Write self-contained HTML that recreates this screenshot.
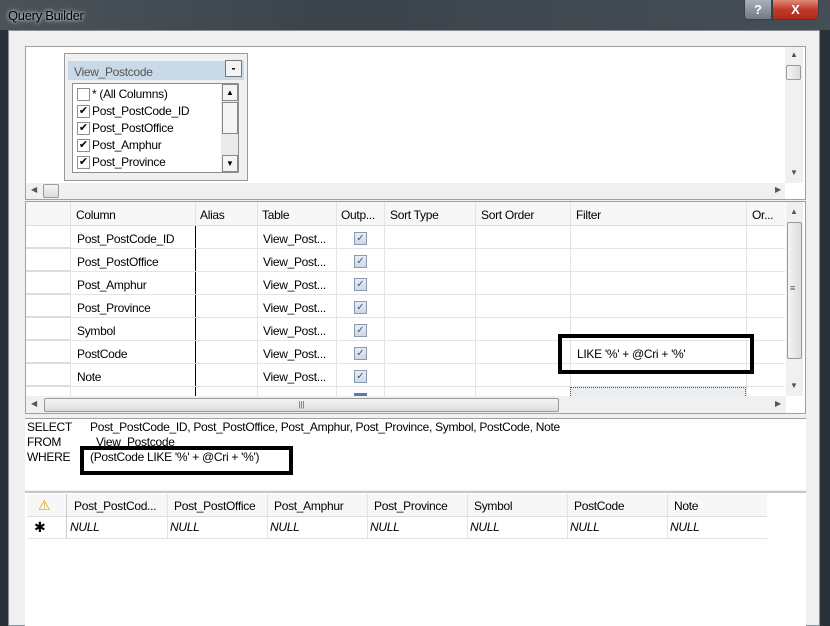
<!DOCTYPE html>
<html><head><style>
*{margin:0;padding:0;box-sizing:border-box}
body{width:830px;height:626px;overflow:hidden;background:#2b3138;font-family:"Liberation Sans",sans-serif;font-size:12px;color:#000;position:relative}
.a{position:absolute}
.t{position:absolute;white-space:nowrap;font-size:12px;letter-spacing:-0.3px}
.vl{position:absolute;width:1px;background:#e4e4e4}
.hl{position:absolute;height:1px;background:#e4e4e4}
.cb{position:absolute;width:13px;height:13px;border:1px solid #8e8f8f;background:#fff;font-size:11px;line-height:11px;text-align:center}
.gc{position:absolute;width:13px;height:13px;border:1px solid #8a98b0;background:linear-gradient(#e8ecf2,#cfd8e6);color:#3a5a8a;font-size:10px;line-height:11px;text-align:center}
</style></head><body>
<div class="a" style="left:0;top:0;width:830px;height:30px;background:linear-gradient(90deg,#4a525a,#3b434b 40%,#454d56)"></div>
<div class="t" style="left:8px;top:8px;color:#000;font-size:13px;text-shadow:0 0 6px #c8ccd0,0 0 3px #e0e4e8">Query Builder</div>
<div class="a" style="left:744px;top:0;width:28px;height:20px;background:linear-gradient(#a9b0b8,#707a84);border:1px solid #3a3f45;border-top:none;border-radius:0 0 0 4px;color:#fff;font-weight:bold;text-align:center;font-size:13px;line-height:19px">?</div>
<div class="a" style="left:772px;top:0;width:47px;height:20px;background:linear-gradient(#e08a78,#c0392b 50%,#b02a1a);border:1px solid #3a3f45;border-top:none;border-radius:0 0 4px 0;color:#fff;font-weight:bold;text-align:center;font-size:13px;line-height:19px">X</div>
<div class="a" style="left:8px;top:30px;width:812px;height:596px;background:#f0f0f0;border:1px solid #8a8f95"></div>
<!-- diagram pane -->
<div class="a" style="left:25px;top:46px;width:781px;height:154px;background:#fff;border:1px solid #a0a0a0"></div>
<div class="a" style="left:785px;top:47px;width:18px;height:136px;background:#f0f0f0"></div>
<div class="a" style="left:786px;top:65px;width:15px;height:15px;background:linear-gradient(90deg,#f4f4f4,#dcdcdc);border:1px solid #9a9a9a;border-radius:2px"></div>
<div class="t" style="left:790px;top:50px;font-size:8px;color:#555">▲</div>
<div class="t" style="left:790px;top:168px;font-size:8px;color:#555">▼</div>
<div class="a" style="left:26px;top:183px;width:759px;height:16px;background:#f0f0f0"></div>
<div class="a" style="left:43px;top:184px;width:16px;height:14px;background:linear-gradient(#f4f4f4,#dcdcdc);border:1px solid #9a9a9a;border-radius:2px"></div>
<div class="t" style="left:31px;top:185px;font-size:8px;color:#555">◀</div>
<div class="t" style="left:775px;top:185px;font-size:8px;color:#555">▶</div>
<div class="a" style="left:64px;top:53px;width:184px;height:128px;background:#f0f0f0;border:1px solid #9a9a9a"></div>
<div class="a" style="left:68px;top:61px;width:176px;height:19px;background:#cad9e8"></div>
<div class="t" style="left:74px;top:65px;color:#555">View_Postcode</div>
<div class="a" style="left:225px;top:60px;width:17px;height:17px;background:#f4f4f4;border:1px solid #777;font-weight:bold;text-align:center;line-height:14px">-</div>
<div class="a" style="left:72px;top:83px;width:167px;height:90px;background:#fff;border:1px solid #8e8f8f"></div>
<div class="a" style="left:221px;top:84px;width:17px;height:88px;background:#eaeaea"></div>
<div class="a" style="left:222px;top:84px;width:16px;height:17px;background:#f4f4f4;border:1px solid #888;font-size:8px;text-align:center;line-height:15px">▲</div>
<div class="a" style="left:222px;top:102px;width:16px;height:32px;background:#f4f4f4;border:1px solid #888"></div>
<div class="a" style="left:222px;top:155px;width:16px;height:17px;background:#f4f4f4;border:1px solid #888;font-size:8px;text-align:center;line-height:15px">▼</div>
<div class="cb" style="left:77px;top:88px"></div><div class="t" style="left:92px;top:87px">* (All Columns)</div>
<div class="cb" style="left:77px;top:105px">✔</div><div class="t" style="left:92px;top:104px">Post_PostCode_ID</div>
<div class="cb" style="left:77px;top:122px">✔</div><div class="t" style="left:92px;top:121px">Post_PostOffice</div>
<div class="cb" style="left:77px;top:139px">✔</div><div class="t" style="left:92px;top:138px">Post_Amphur</div>
<div class="cb" style="left:77px;top:156px">✔</div><div class="t" style="left:92px;top:155px">Post_Province</div>
<!-- grid pane -->
<div class="a" style="left:25px;top:201px;width:781px;height:213px;background:#fff;border:1px solid #a0a0a0"></div>
<div class="a" style="left:26px;top:202px;width:759px;height:24px;background:#f7f7f7;border-bottom:1px solid #ddd"></div>
<div class="t" style="left:76px;top:208px">Column</div>
<div class="t" style="left:200px;top:208px">Alias</div>
<div class="t" style="left:262px;top:208px">Table</div>
<div class="t" style="left:341px;top:208px">Outp...</div>
<div class="t" style="left:390px;top:208px">Sort Type</div>
<div class="t" style="left:481px;top:208px">Sort Order</div>
<div class="t" style="left:576px;top:208px">Filter</div>
<div class="t" style="left:752px;top:208px">Or...</div>
<div class="vl" style="left:70px;top:202px;height:194px"></div>
<div class="a" style="left:195px;top:226px;width:1px;height:170px;background:#000"></div>
<div class="vl" style="left:195px;top:202px;height:24px"></div>
<div class="vl" style="left:257px;top:202px;height:194px"></div>
<div class="vl" style="left:336px;top:202px;height:194px"></div>
<div class="vl" style="left:384px;top:202px;height:194px"></div>
<div class="vl" style="left:475px;top:202px;height:194px"></div>
<div class="vl" style="left:570px;top:202px;height:194px"></div>
<div class="vl" style="left:746px;top:202px;height:194px"></div>
<div class="a" style="left:26px;top:226px;width:44px;height:170px;background:repeating-linear-gradient(#fff 0,#fff 21px,#ddd 21px,#ddd 23px)"></div>
<div class="a" style="left:70px;top:226px;width:715px;height:170px;background:repeating-linear-gradient(transparent 0,transparent 22px,#e4e4e4 22px,#e4e4e4 23px)"></div>
<div class="t" style="left:77px;top:232px">Post_PostCode_ID</div><div class="t" style="left:263px;top:232px">View_Post...</div><div class="gc" style="left:354px;top:232px">✓</div>
<div class="t" style="left:77px;top:255px">Post_PostOffice</div><div class="t" style="left:263px;top:255px">View_Post...</div><div class="gc" style="left:354px;top:255px">✓</div>
<div class="t" style="left:77px;top:278px">Post_Amphur</div><div class="t" style="left:263px;top:278px">View_Post...</div><div class="gc" style="left:354px;top:278px">✓</div>
<div class="t" style="left:77px;top:301px">Post_Province</div><div class="t" style="left:263px;top:301px">View_Post...</div><div class="gc" style="left:354px;top:301px">✓</div>
<div class="t" style="left:77px;top:324px">Symbol</div><div class="t" style="left:263px;top:324px">View_Post...</div><div class="gc" style="left:354px;top:324px">✓</div>
<div class="t" style="left:77px;top:347px">PostCode</div><div class="t" style="left:263px;top:347px">View_Post...</div><div class="gc" style="left:354px;top:347px">✓</div>
<div class="t" style="left:77px;top:370px">Note</div><div class="t" style="left:263px;top:370px">View_Post...</div><div class="gc" style="left:354px;top:370px">✓</div>
<div class="a" style="left:570px;top:387px;width:176px;height:9px;border:1px dotted #555;border-bottom:none;background:#e8edf2"></div>
<div class="a" style="left:354px;top:393px;width:13px;height:3px;background:#5a7ab0"></div>
<div class="t" style="left:577px;top:347px">LIKE '%' + @Cri + '%'</div>
<div class="a" style="left:558px;top:334px;width:196px;height:40px;border:4px solid #000"></div>
<div class="a" style="left:786px;top:202px;width:17px;height:194px;background:#f0f0f0"></div>
<div class="a" style="left:787px;top:222px;width:15px;height:137px;background:linear-gradient(90deg,#f4f4f4,#dcdcdc);border:1px solid #9a9a9a;border-radius:2px"></div>
<div class="t" style="left:790px;top:283px;font-size:9px;color:#555">≡</div>
<div class="t" style="left:790px;top:207px;font-size:8px;color:#555">▲</div>
<div class="t" style="left:790px;top:381px;font-size:8px;color:#555">▼</div>
<div class="a" style="left:26px;top:396px;width:760px;height:17px;background:#f0f0f0"></div>
<div class="a" style="left:44px;top:398px;width:515px;height:14px;background:linear-gradient(#f4f4f4,#dcdcdc);border:1px solid #9a9a9a;border-radius:2px;text-align:center;font-size:8px;line-height:12px;color:#555">|||</div>
<div class="t" style="left:31px;top:399px;font-size:8px;color:#555">◀</div>
<div class="t" style="left:775px;top:399px;font-size:8px;color:#555">▶</div>
<!-- SQL pane -->
<div class="a" style="left:25px;top:418px;width:781px;height:72px;background:#fff;border-top:1px solid #a0a0a0"></div>
<div class="t" style="left:27px;top:420px">SELECT</div><div class="t" style="left:90px;top:420px">Post_PostCode_ID, Post_PostOffice, Post_Amphur, Post_Province, Symbol, PostCode, Note</div>
<div class="t" style="left:27px;top:435px">FROM</div><div class="t" style="left:96px;top:435px">View_Postcode</div>
<div class="t" style="left:27px;top:450px">WHERE</div>
<div class="a" style="left:80px;top:446px;width:213px;height:29px;border:4px solid #000;background:#fff"></div>
<div class="t" style="left:90px;top:450px">(PostCode LIKE '%' + @Cri + '%')</div>
<!-- results -->
<div class="a" style="left:25px;top:491px;width:781px;height:135px;background:#fff;border-top:2px solid #c8c8c8"></div>
<div class="a" style="left:27px;top:494px;width:740px;height:23px;background:#f7f7f7;border-bottom:1px solid #ddd"></div>
<div class="a" style="left:27px;top:517px;width:740px;height:22px;border-bottom:1px solid #e4e4e4"></div>
<div class="a" style="left:66px;top:494px;width:1px;height:45px;background:#ccc"></div>
<div class="vl" style="left:167px;top:494px;height:45px"></div>
<div class="vl" style="left:267px;top:494px;height:45px"></div>
<div class="vl" style="left:367px;top:494px;height:45px"></div>
<div class="vl" style="left:467px;top:494px;height:45px"></div>
<div class="vl" style="left:567px;top:494px;height:45px"></div>
<div class="vl" style="left:667px;top:494px;height:45px"></div>
<div class="t" style="left:38px;top:497px;color:#e0a800;font-size:14px">⚠</div>
<div class="t" style="left:74px;top:499px">Post_PostCod...</div>
<div class="t" style="left:174px;top:499px">Post_PostOffice</div>
<div class="t" style="left:274px;top:499px">Post_Amphur</div>
<div class="t" style="left:374px;top:499px">Post_Province</div>
<div class="t" style="left:474px;top:499px">Symbol</div>
<div class="t" style="left:574px;top:499px">PostCode</div>
<div class="t" style="left:674px;top:499px">Note</div>
<div class="t" style="left:34px;top:519px;font-size:14px">✱</div>
<div class="t" style="left:70px;top:520px;font-style:italic">NULL</div>
<div class="t" style="left:170px;top:520px;font-style:italic">NULL</div>
<div class="t" style="left:270px;top:520px;font-style:italic">NULL</div>
<div class="t" style="left:370px;top:520px;font-style:italic">NULL</div>
<div class="t" style="left:470px;top:520px;font-style:italic">NULL</div>
<div class="t" style="left:570px;top:520px;font-style:italic">NULL</div>
<div class="t" style="left:670px;top:520px;font-style:italic">NULL</div>
</body></html>
